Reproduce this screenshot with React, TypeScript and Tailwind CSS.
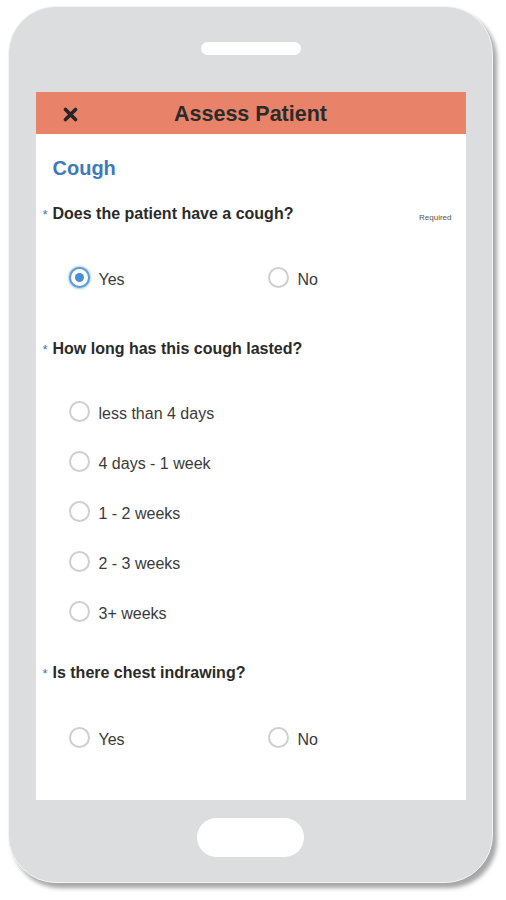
import React from 'react';

type Option = { label: string; checked?: boolean };

function Radio({ checked }: { checked?: boolean }) {
  if (checked) {
    return (
      <span className="flex h-[21px] w-[21px] items-center justify-center rounded-full border-2 border-[#5b9bd9] bg-white shadow-[0_0_2px_1px_rgba(91,155,217,0.45)]">
        <span className="h-[9px] w-[9px] rounded-full bg-[#4a8fd4]" />
      </span>
    );
  }
  return <span className="h-[21px] w-[21px] rounded-full border-2 border-[#cfcfcf] bg-white" />;
}

function Choice({ label, checked }: Option) {
  return (
    <label className="flex h-6 items-center gap-[9px]">
      <Radio checked={checked} />
      <span className="mt-[5px] text-[16px] text-[#3a3a3a]">{label}</span>
    </label>
  );
}

function Question({ text, required }: { text: string; required?: boolean }) {
  return (
    <div className="flex h-5 items-center">
      <span className="-ml-[10px] w-[10px] text-[13px] leading-none text-[#3d7ab8]">*</span>
      <span className="text-[16px] font-bold text-[#2a2a2a]">{text}</span>
      {required && <span className="ml-auto mr-[14px] mt-[8px] text-[8px] text-[#555]">Required</span>}
    </div>
  );
}

const durations: Option[] = [
  { label: 'less than 4 days' },
  { label: '4 days - 1 week' },
  { label: '1 - 2 weeks' },
  { label: '2 - 3 weeks' },
  { label: '3+ weeks' },
];

export default function App() {
  return (
    <div className="min-h-[900px] w-[506px] bg-white pl-[8px] pt-[6px] font-['Liberation_Sans',Arial,sans-serif]">
      <div className="flex h-[877px] w-[485px] flex-col items-center rounded-[48px] border border-[#f4f4f4] bg-[#dcddde] shadow-[4px_5px_4px_rgba(0,0,0,0.35)]">
        {/* speaker */}
        <div className="mt-[35px] h-[13px] w-[100px] rounded-full bg-white" />

        {/* screen */}
        <div className="mt-[37px] flex h-[708px] w-[430px] flex-col bg-white">
          <div className="relative flex h-[42px] items-center justify-center bg-[#e8836a]">
            <svg className="absolute left-[27px] top-[15px]" width="15" height="15" viewBox="0 0 15 15">
              <path d="M2.5 2.5 L12.5 12.5 M12.5 2.5 L2.5 12.5" stroke="#262626" strokeWidth="3.6" strokeLinecap="round" />
            </svg>
            <span className="mt-[3px] text-[21.5px] font-bold text-[#2b2b2b]">Assess Patient</span>
          </div>

          <div className="flex flex-col pl-[17px]">
            <div className="mt-[22px] h-6 text-[20px] font-bold leading-6 text-[#3d7ab8]">Cough</div>

            <div className="mt-[24px]">
              <Question text="Does the patient have a cough?" required />
            </div>
            <div className="mt-[41px] grid grid-cols-[199px_1fr] pl-[16px]">
              <Choice label="Yes" checked />
              <Choice label="No" />
            </div>

            <div className="mt-[50px]">
              <Question text="How long has this cough lasted?" />
            </div>
            <div className="mt-[40px] flex flex-col gap-[26px] pl-[16px]">
              {durations.map((d) => (
                <Choice key={d.label} label={d.label} />
              ))}
            </div>

            <div className="mt-[40px]">
              <Question text="Is there chest indrawing?" />
            </div>
            <div className="mt-[42px] grid grid-cols-[199px_1fr] pl-[16px]">
              <Choice label="Yes" />
              <Choice label="No" />
            </div>
          </div>
        </div>

        {/* home button */}
        <div className="mt-[18px] h-[39px] w-[107px] rounded-[20px] bg-white" />
      </div>
    </div>
  );
}
